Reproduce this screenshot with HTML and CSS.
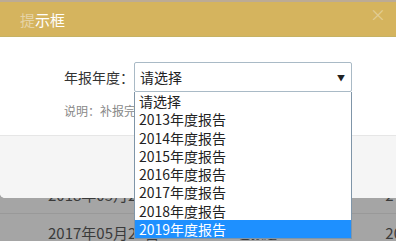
FILE: index.html
```html
<!DOCTYPE html>
<html lang="zh-CN">
<head>
  <meta charset="UTF-8">
  <meta name="viewport" content="width=device-width, initial-scale=1.0">
  <title>提示框</title>
  <link rel="stylesheet" href="styles.css">
</head>
<body>
  <!-- page behind the modal -->
  <div class="page">
    <div class="row">
      <span class="col-date">2018年05月20日</span>
      <span class="col-state">已报送</span>
      <span class="col-end">24</span>
    </div>
    <div class="row">
      <span class="col-date">2018年05月20日</span>
      <span class="col-state">已报送</span>
      <span class="col-end">24</span>
    </div>
    <div class="row">
      <span class="col-date">2017年05月20日</span>
      <span class="col-state">已报送</span>
      <span class="col-end">20</span>
    </div>
  </div>

  <!-- modal -->
  <div class="modal">
    <div class="modal-head">
      <span class="title"><span class="title-fade">提</span>示框</span>
      <span class="close">×</span>
    </div>
    <div class="modal-body">
      <div class="form-row">
        <label class="label">年报年度：</label>
        <div class="select">
          <span>请选择</span>
          <span class="arrow">▼</span>
        </div>
      </div>
      <p class="note">说明：补报完成后请重新提交年报</p>
    </div>
    <div class="modal-foot"></div>
  </div>

  <!-- opened dropdown -->
  <ul class="options">
    <li>请选择</li>
    <li>2013年度报告</li>
    <li>2014年度报告</li>
    <li>2015年度报告</li>
    <li>2016年度报告</li>
    <li>2017年度报告</li>
    <li>2018年度报告</li>
    <li class="active">2019年度报告</li>
  </ul>
</body>
</html>
```

FILE: styles.css
```css
body {
  margin: 0;
  width: 396px;
  height: 241px;
  overflow: hidden;
  position: relative;
  background-color: #a5a5a5;
  font-family: "Noto Sans CJK SC", "Noto Sans", sans-serif;
}
.page {
  padding-top: 138px;
}
.row {
  display: flex;
  align-items: center;
  height: 37px;
  border-bottom: 1px solid #999;
  color: #3a3a3a;
  font-size: 15px;
}
.col-date {
  margin-left: 48px;
  width: 190px;
}
.col-state {
  width: 147px;
  font-size: 13px;
}
.col-end {
  margin-left: auto;
  margin-right: -6px;
}
.modal {
  position: absolute;
  top: 0;
  left: 0;
  right: 0;
  background: white;
  border-bottom-left-radius: 5px;
  overflow: hidden;
}
.modal-head {
  display: flex;
  align-items: center;
  height: 34px;
  border-top: 2px solid #bcab95;
  border-bottom: 1px solid #c6b263;
  background-color: #d5b45e;
  padding: 0 10px 0 20px;
}
.title {
  color: #fff;
  font-size: 15px;
}
.title-fade {
  color: #e6d3a6;
}
.close {
  margin-left: auto;
  color: rgba(255, 255, 255, 0.35);
  font-size: 16px;
  margin-top: -10px;
}
.modal-body {
  height: 73px;
  padding: 25px 0 0 64px;
}
.form-row {
  display: flex;
  align-items: center;
}
.label {
  width: 70px;
  font-size: 14px;
  color: #333;
}
.select {
  display: flex;
  align-items: center;
  box-sizing: border-box;
  width: 218px;
  height: 30px;
  padding: 0 6px 0 5px;
  border: 1px solid #a9bac6;
  border-radius: 2px;
  font-size: 14px;
  color: #222;
}
.arrow {
  margin-left: auto;
  font-size: 8px;
}
.note {
  margin: 10px 0 0;
  font-size: 12px;
  color: #888;
}
.modal-foot {
  height: 62px;
  background-color: #f5f5f5;
  border-top: 1px solid #e6e6e6;
}
.options {
  position: absolute;
  top: 92px;
  left: 134px;
  width: 216px;
  margin: 0;
  padding: 0;
  list-style: none;
  background: white;
  border: 1px solid #7f95a8;
  border-top: none;
  font-size: 14px;
  color: #222;
}
.options li {
  line-height: 18.3px;
  padding-left: 4px;
}
.options li.active {
  background-color: #1e90ff;
  color: #fff;
}
```
